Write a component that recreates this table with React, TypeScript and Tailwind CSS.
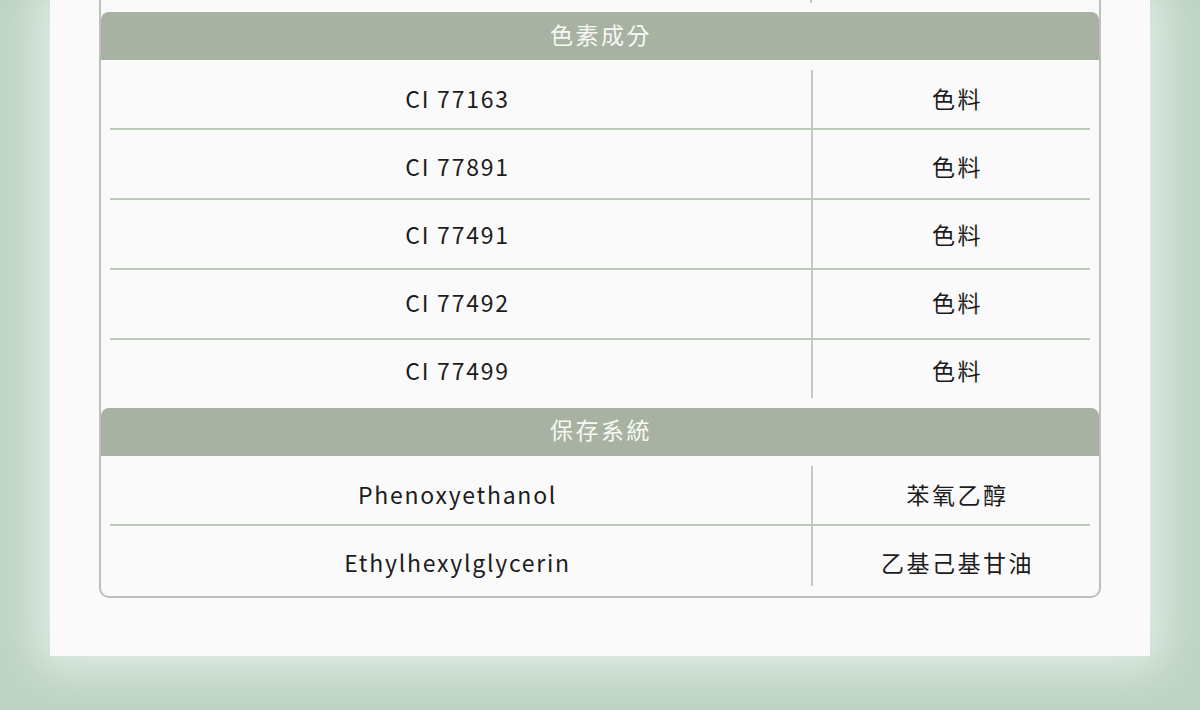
import React from "react";

type Row = [string, string];

const sections: { title: string; rows: Row[]; lastH: string; offs: string[]; hOff: string }[] = [
  {
    title: "色素成分",
    rows: [
      ["CI 77163", "色料"],
      ["CI 77891", "色料"],
      ["CI 77491", "色料"],
      ["CI 77492", "色料"],
      ["CI 77499", "色料"],
    ],
    lastH: "h-[68px]",
    offs: ["pt-[9px]", "pt-[4px]", "pt-[1px]", "pb-[4px]", "pb-[8px]"],
    hOff: "pb-[4px]",
  },
  {
    title: "保存系統",
    rows: [
      ["Phenoxyethanol", "苯氧乙醇"],
      ["Ethylhexylglycerin", "乙基己基甘油"],
    ],
    lastH: "h-[70px]",
    offs: ["pt-[9px]", "pt-[3px]"],
    hOff: "pb-[6px]",
  },
];

function Section({
  title,
  rows,
  lastH,
  offs,
  hOff,
}: {
  title: string;
  rows: Row[];
  lastH: string;
  offs: string[];
  hOff: string;
}) {
  return (
    <div>
      <div className="h-[48px] rounded-t-[8px] bg-[#a7b2a2] flex items-center justify-center text-[23px] tracking-[2.5px] text-[#f7f8f5]">
        <span className={"pl-[2px] " + hOff}>{title}</span>
      </div>
      <div className="flex">
        <div className="w-[710px] pl-[9px] flex flex-col">
          {rows.map((r, i) => (
            <div
              key={i}
              className={
                i < rows.length - 1
                  ? "h-[70px] border-b-2 border-[#bfc9bd] flex items-center justify-center"
                  : lastH + " flex items-center justify-center"
              }
            >
              <span className={"pr-[6px] tracking-[1.75px] " + offs[i]}>{r[0]}</span>
            </div>
          ))}
        </div>
        <div className="w-[2px] my-[10px] bg-[#c3c8c1]" />
        <div className="flex-1 pr-[9px] flex flex-col">
          {rows.map((r, i) => (
            <div
              key={i}
              className={
                i < rows.length - 1
                  ? "h-[70px] border-b-2 border-[#bfc9bd] flex items-center justify-center"
                  : lastH + " flex items-center justify-center"
              }
            >
              <span className={"pl-[12px] tracking-[2.5px] " + offs[i]}>{r[1]}</span>
            </div>
          ))}
        </div>
      </div>
    </div>
  );
}

export default function App() {
  return (
    <div
      className="w-[1200px] h-[710px] overflow-hidden bg-[#bdd3c3] text-[23px] text-[#1c1c1c]"
      style={{ fontFamily: '"Noto Sans CJK TC", "Noto Sans", sans-serif' }}
    >
      <div className="mx-[50px] h-[656px] bg-[#fafafa] shadow-[0_0_45px_12px_rgba(235,244,238,0.85)]">
        <div className="mx-[49px] border-x-2 border-b-2 border-[#bcbfba] rounded-b-[10px] overflow-hidden bg-[#fafafa]">
          <div className="h-[12px] flex">
            <div className="w-[709px]" />
            <div className="w-[2px] h-[3px] bg-[#c3c8c1]" />
          </div>
          {sections.map((s) => (
            <Section
              key={s.title}
              title={s.title}
              rows={s.rows}
              lastH={s.lastH}
              offs={s.offs}
              hOff={s.hOff}
            />
          ))}
        </div>
      </div>
    </div>
  );
}
